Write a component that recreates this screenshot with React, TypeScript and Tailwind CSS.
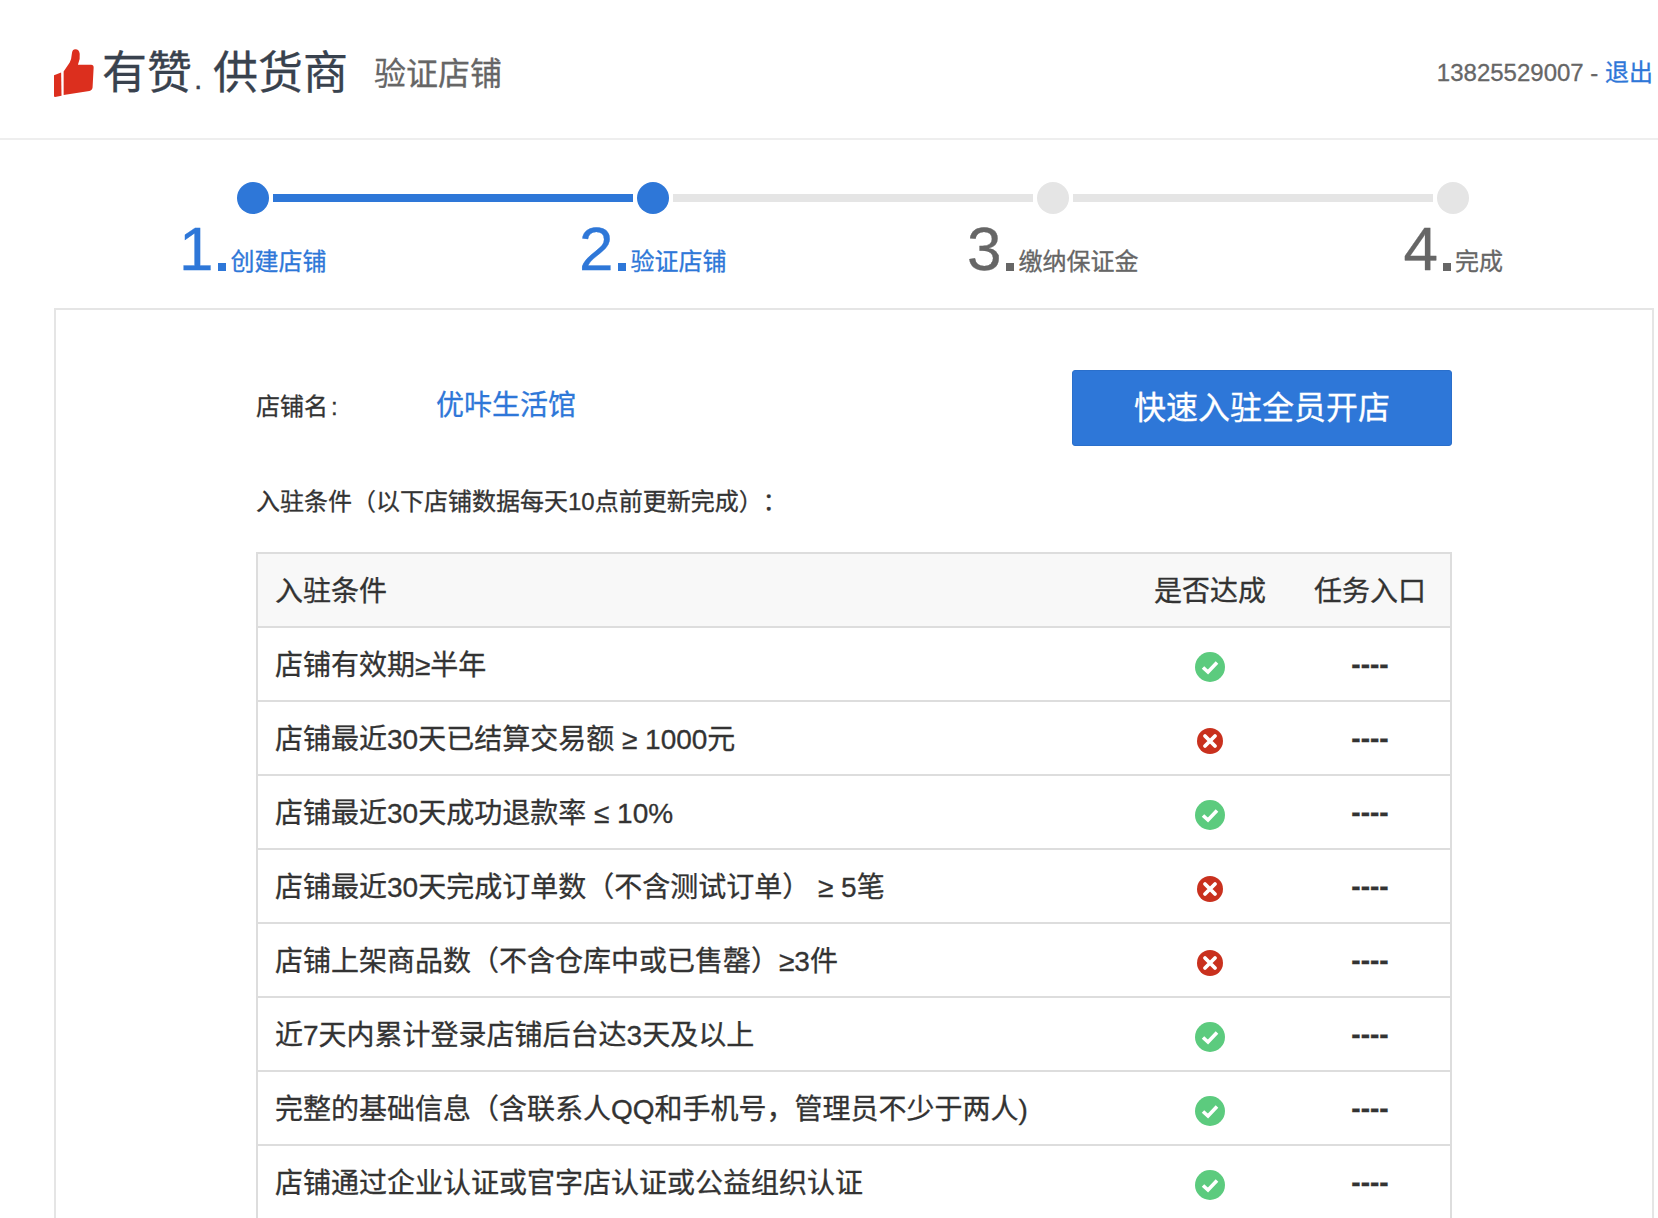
const BLUE = "text-[#2e77d8]";

function Thumb() {
  return (
    <svg width="40" height="48" viewBox="0 0 112 143" preserveAspectRatio="none" className="shrink-0">
      <path d="M0 78 L20 70 L21 139 L3 143 Q0 143 0 140 Z" fill="#dc2f1e" />
      <path
        d="M27 67 L44 40 Q49 30 50 14 Q51 1 60 1 Q70 1 72 14 Q74 30 67 47 L104 47 Q111 47 111 55 L108 115 Q107 124 99 125 L27 137 Z"
        fill="#dc2f1e"
      />
    </svg>
  );
}

function Ok() {
  return (
    <svg width="30" height="30" viewBox="0 0 30 30">
      <circle cx="15" cy="15" r="15" fill="#5ccb7e" />
      <path d="M8 15.5 L13 20 L22 10.5" fill="none" stroke="#fff" strokeWidth="3.6" />
    </svg>
  );
}

function No() {
  return (
    <svg width="26" height="26" viewBox="0 0 26 26">
      <circle cx="13" cy="13" r="13" fill="#c9311e" />
      <path d="M8 8 L18 18 M18 8 L8 18" fill="none" stroke="#fff" strokeWidth="3.8" strokeLinecap="round" />
    </svg>
  );
}

function Step({ n, label, active, left, right, width }: { n: number; label: string; active: boolean; left?: string; right?: string; width: string }) {
  const color = active ? "text-[#2e77d8]" : "text-[#666666]";
  return (
    <div className={`flex flex-col items-center ${width}`}>
      <div className="flex w-full items-center gap-1">
        <div className={`h-2 flex-1 ${left ?? ""}`} />
        <div className={`h-8 w-8 rounded-full ${active ? "bg-[#2e77d8]" : "bg-[#e5e5e5]"}`} />
        <div className={`h-2 flex-1 ${right ?? ""}`} />
      </div>
      <div className={`mt-[1px] flex h-[66px] items-end ${color}`}>
        <span className="text-[62px] leading-[64px]">{n}</span>
        <span className="ml-[5px] mb-[10px] h-[8px] w-[8px] bg-current" />
        <span className="ml-[4px] mb-[3px] text-[24px] leading-[32px]">{label}</span>
      </div>
    </div>
  );
}

const rows: [string, boolean][] = [
  ["店铺有效期≥半年", true],
  ["店铺最近30天已结算交易额 ≥ 1000元", false],
  ["店铺最近30天成功退款率 ≤ 10%", true],
  ["店铺最近30天完成订单数（不含测试订单） ≥ 5笔", false],
  ["店铺上架商品数（不含仓库中或已售罄）≥3件", false],
  ["近7天内累计登录店铺后台达3天及以上", true],
  ["完整的基础信息（含联系人QQ和手机号，管理员不少于两人)", true],
  ["店铺通过企业认证或官字店认证或公益组织认证", true],
];

export default function App() {
  return (
    <div className="h-[1218px] overflow-hidden bg-white font-['Liberation_Sans','Noto_Sans_CJK_SC',sans-serif] text-[#333333] [-webkit-text-stroke:0.3px_currentColor]">
      <header className="flex h-[140px] items-center border-b-2 border-[#eeeeee] pl-[54px] pr-[5px] pt-[8px]">
        <Thumb />
        <span className="ml-[8px] translate-y-[3px] text-[45px] leading-[50px] text-[#39424e]">
          有赞<span className="inline-block w-[21px] pl-[2px] text-[30px]">.</span>供货商
        </span>
        <span className="ml-[26px] translate-y-px text-[32px] leading-[40px] text-[#666666]">验证店铺</span>
        <span className="ml-auto text-[24px] leading-[32px] text-[#666666]">
          13825529007 - <span className={BLUE}>退出</span>
        </span>
      </header>

      <main className="mx-[54px] w-[1600px]">
        <div className="-ml-px flex pt-[42px]">
          <Step n={1} width="w-[400px]" label="创建店铺" active right="bg-[#2e77d8]" />
          <Step n={2} width="w-[401px]" label="验证店铺" active left="bg-[#2e77d8]" right="bg-[#e5e5e5]" />
          <Step n={3} width="w-[400px]" label="缴纳保证金" active={false} left="bg-[#e5e5e5]" right="bg-[#e5e5e5]" />
          <Step n={4} width="w-[402px]" label="完成" active={false} left="bg-[#e5e5e5]" />
        </div>

        <section className="mt-[27px] border-2 border-[#e5e5e5] px-[200px] pb-[60px] pt-[60px]">
          <div className="flex h-[76px] items-center">
            <span className="w-[180px] -translate-y-px text-[24px]">
              店铺名<span className="ml-[3px]">:</span>
            </span>
            <span className={`-translate-y-[2px] text-[28px] ${BLUE}`}>优咔生活馆</span>
            <button className="ml-auto h-[76px] w-[380px] rounded-[3px] border border-[#2a6fcb] bg-[#2e77d8] text-[32px] text-white">
              快速入驻全员开店
            </button>
          </div>
          <p className="mt-[40px] text-[24px] leading-[32px] [text-spacing-trim:space-all]">入驻条件（以下店铺数据每天10点前更新完成）：</p>
          <div className="mt-[34px] w-[1196px] border-x-2 border-t-2 border-[#dddddd] text-[28px]">
            <div className="grid h-[74px] grid-cols-[1fr_160px_160px] items-center border-b-2 border-[#dddddd] bg-[#f8f8f8] pt-[4px]">
              <span className="pl-[17px]">入驻条件</span>
              <span className="text-center">是否达成</span>
              <span className="text-center">任务入口</span>
            </div>
            {rows.map(([text, ok]) => (
              <div key={text} className="grid h-[74px] grid-cols-[1fr_160px_160px] items-center border-b-2 border-[#dddddd] pt-[4px]">
                <span className="whitespace-nowrap pl-[17px]">{text}</span>
                <span className="flex translate-y-px justify-center">{ok ? <Ok /> : <No />}</span>
                <span className="-translate-y-px text-center font-bold">----</span>
              </div>
            ))}
          </div>
        </section>
      </main>
    </div>
  );
}
